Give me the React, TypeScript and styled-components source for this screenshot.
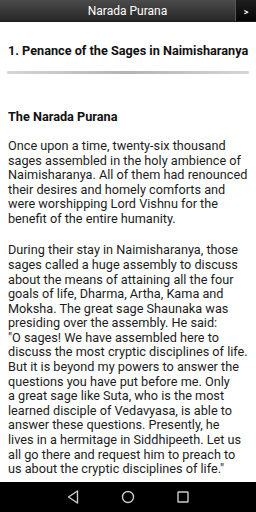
import React from 'react';
import styled, { createGlobalStyle } from 'styled-components';

const GlobalStyle = createGlobalStyle`
  html, body {
    margin: 0;
    padding: 0;
    background: #fff;
  }
  * {
    box-sizing: border-box;
  }
`;

const Screen = styled.div`
  width: 256px;
  height: 512px;
  display: flex;
  flex-direction: column;
  overflow: hidden;
  font-family: Roboto, "Noto Sans", sans-serif;
  background: #fff;
`;

const Header = styled.div`
  height: 22px;
  flex-shrink: 0;
  display: flex;
  align-items: stretch;
  background: linear-gradient(#4b4b4b, #262626);
  border-bottom: 1px solid #1a1a1a;
`;

const HeaderTitle = styled.div`
  flex: 1;
  display: flex;
  align-items: center;
  justify-content: center;
  padding-left: 20px;
  color: #fff;
  font-size: 12px;
`;

const NextButton = styled.div`
  width: 21px;
  display: flex;
  align-items: center;
  justify-content: center;
  padding-top: 2px;
  background: linear-gradient(#1e1e1e, #050505);
  border-left: 1px solid #555;
  color: #fff;
  font-size: 9px;
  font-weight: bold;
`;

const Content = styled.div`
  flex: 1;
  overflow: hidden;
  padding: 0 0 0 8px;
  color: #1c1c1c;
  font-size: 12.7px;
`;

const ChapterTitle = styled.h1`
  margin: 20.7px 0 0;
  font-size: 12.7px;
  line-height: 16px;
  font-weight: bold;
  color: #111;
  white-space: nowrap;
`;

const Divider = styled.div`
  height: 3px;
  margin: 12.5px 7px 0 -1px;
  border-radius: 1px;
  background: linear-gradient(90deg, #d6d6d6, #b4b4b4 50%, #d6d6d6);
`;

const SectionTitle = styled.h2`
  margin: 34.7px 0 0;
  font-size: 12.7px;
  line-height: 15px;
  font-weight: bold;
  color: #111;
`;

const Para = styled.p<{ $gap: number }>`
  margin: ${(p) => p.$gap}px 0 0;
  line-height: 14.6px;
  white-space: pre-line;
`;

const NavBar = styled.div`
  height: 30px;
  flex-shrink: 0;
  background: #000;
  display: flex;
  align-items: center;
  justify-content: center;
  gap: 39px;
`;

const NavIcon = styled.svg`
  width: 16px;
  height: 16px;
`;

const intro = `Once upon a time, twenty-six thousand
sages assembled in the holy ambience of
Naimisharanya. All of them had renounced
their desires and homely comforts and
were worshipping Lord Vishnu for the
benefit of the entire humanity.`;

const assembly = `During their stay in Naimisharanya, those
sages called a huge assembly to discuss
about the means of attaining all the four
goals of life, Dharma, Artha, Kama and
Moksha. The great sage Shaunaka was
presiding over the assembly. He said:
"O sages! We have assembled here to
discuss the most cryptic disciplines of life.
But it is beyond my powers to answer the
questions you have put before me. Only
a great sage like Suta, who is the most
learned disciple of Vedavyasa, is able to
answer these questions. Presently, he
lives in a hermitage in Siddhipeeth. Let us
all go there and request him to preach to
us about the cryptic disciplines of life."`;

export default function App() {
  return (
    <Screen>
      <GlobalStyle />
      <Header>
        <HeaderTitle>Narada Purana</HeaderTitle>
        <NextButton>&gt;</NextButton>
      </Header>
      <Content>
        <ChapterTitle>1. Penance of the Sages in Naimisharanya</ChapterTitle>
        <Divider />
        <SectionTitle>The Narada Purana</SectionTitle>
        <Para $gap={15.2}>{intro}</Para>
        <Para $gap={16.7}>{assembly}</Para>
      </Content>
      <NavBar>
        <NavIcon viewBox="0 0 16 16">
          <path d="M12.5 2 L3.5 8 L12.5 14 Z" fill="none" stroke="#ccc" strokeWidth="1.4" strokeLinejoin="round" />
        </NavIcon>
        <NavIcon viewBox="0 0 16 16">
          <circle cx="8" cy="8" r="5.5" fill="none" stroke="#ccc" strokeWidth="1.4" />
        </NavIcon>
        <NavIcon viewBox="0 0 16 16">
          <rect x="3" y="3" width="10" height="10" rx="0.5" fill="none" stroke="#ccc" strokeWidth="1.4" />
        </NavIcon>
      </NavBar>
    </Screen>
  );
}
